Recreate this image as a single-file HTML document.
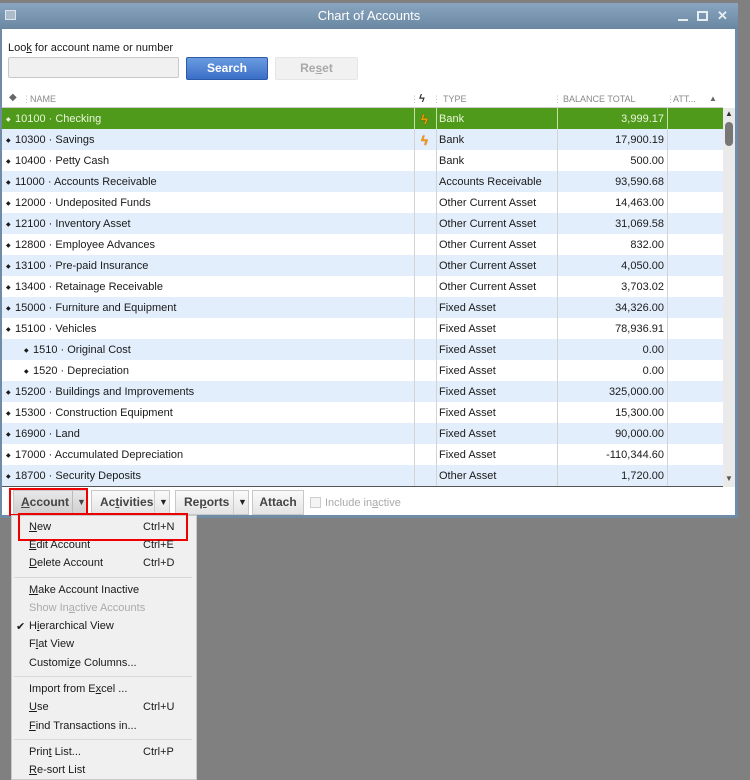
<!DOCTYPE html>
<html><head><meta charset="utf-8"><style>
*{margin:0;padding:0;box-sizing:border-box}
body{width:750px;height:780px;background:#808080;position:relative;overflow:hidden;font-family:"Liberation Sans",sans-serif;font-size:11px;color:#1a1a1a}
.abs{position:absolute}
#win{left:0;top:3px;width:738px;height:515px;background:#6f8ba5}
#title{left:0;top:3px;width:738px;height:26px;background:linear-gradient(#89a5bf,#6a87a2);color:#fff;font-size:13px;text-align:center;line-height:26px}
#body{left:2px;top:29px;width:733px;height:486px;background:#fff}
.row{position:absolute;left:2px;width:721px;height:21px;line-height:23px;font-size:11px}
.row span{position:absolute;top:0;white-space:nowrap}
.c{position:absolute;top:0;width:1px;height:21px;background:#d0d0d0}
.btn{position:absolute;top:490px;height:25px;border:1px solid #c8c8c8;background:linear-gradient(#fafafa,#e4e4e4);font-weight:bold;color:#444;line-height:23px;font-size:12px}
.mi{position:absolute;left:29px;font-size:11px;color:#1a1a1a}
.sc{position:absolute;left:143px;font-size:11px;color:#1a1a1a}
.sep{position:absolute;left:14px;width:178px;height:1px;background:#d8d8d8}
u{text-decoration:underline}
</style></head><body>
<div class="abs" id="win"></div>
<div class="abs" id="title">Chart of Accounts
<div class="abs" style="left:5px;top:7px;width:11px;height:10px;border:1px solid #dde6ee;background:#aabbcc"></div>
<div class="abs" style="left:678px;top:16px;width:10px;height:2px;background:#e6edf3"></div>
<div class="abs" style="left:697px;top:8px;width:11px;height:10px;border:2px solid #e6edf3"></div>
<div class="abs" style="left:717px;top:0;color:#e6edf3;font-weight:bold;font-size:13px">✕</div>
</div>
<div class="abs" id="body"></div>
<div class="abs" style="left:8px;top:42px;font-size:11px">Loo<u>k</u> for account name or number</div>
<div class="abs" style="left:8px;top:57px;width:171px;height:21px;border:1px solid #c8c8c8;border-radius:2px;background:#f0f0f0"></div>
<div class="abs" style="left:186px;top:57px;width:82px;height:23px;border:1px solid #2c5aa8;border-radius:2px;background:linear-gradient(#6a9be0,#3b6fc7);color:#fff;font-weight:bold;text-align:center;line-height:21px;font-size:12px">Search</div>
<div class="abs" style="left:275px;top:57px;width:83px;height:23px;border:1px solid #e6e6e6;border-radius:2px;background:#f1f1f1;color:#a8a8a8;font-weight:bold;text-align:center;line-height:21px;font-size:12px">Re<u>s</u>et</div>
<!-- header -->
<div class="abs" style="left:2px;top:90px;width:733px;height:18px;font-size:9px;color:#8a8a8a;line-height:18px">
<span class="abs" style="left:7px;top:-1px;font-size:10px;color:#666">◆</span>
<span class="abs" style="left:20px;color:#bbb">⋮</span><span class="abs" style="left:28px">NAME</span>
<span class="abs" style="left:408px;color:#bbb">⋮</span><span class="abs" style="left:417px;color:#333;font-size:11px;font-weight:bold">ϟ</span>
<span class="abs" style="left:430px;color:#bbb">⋮</span><span class="abs" style="left:441px">TYPE</span>
<span class="abs" style="left:551px;color:#bbb">⋮</span><span class="abs" style="left:561px">BALANCE TOTAL</span>
<span class="abs" style="left:664px;color:#bbb">⋮</span><span class="abs" style="left:671px">ATT...</span>
<span class="abs" style="left:707px;font-size:8px;color:#666">▲</span>
</div>
<div class="abs" style="left:2px;top:107px;width:721px;height:1px;background:#ccc"></div>
<div id="rows"></div>
<!-- scrollbar -->
<div class="abs" style="left:723px;top:108px;width:12px;height:379px;background:#eaeaea"></div>
<div class="abs" style="left:725px;top:109px;font-size:8px;color:#333">▲</div>
<div class="abs" style="left:725px;top:122px;width:8px;height:24px;border-radius:4px;background:#777"></div>
<div class="abs" style="left:725px;top:474px;font-size:8px;color:#555">▼</div>
<div class="abs" style="left:2px;top:486px;width:721px;height:1px;background:#555"></div>
<!-- toolbar -->
<div class="btn" style="left:13px;width:74px;background:linear-gradient(#e8e8e8,#cfcfcf)"><span style="position:absolute;left:7px"><u>A</u>ccount</span><span style="position:absolute;left:58px;border-left:1px solid #bbb;padding-left:4px;font-size:9px">▼</span></div>
<div class="abs" style="left:9px;top:488px;width:79px;height:28px;border:2px solid #e00"></div>
<div class="btn" style="left:91px;width:79px"><span style="position:absolute;left:8px">Ac<u>t</u>ivities</span><span style="position:absolute;left:62px;border-left:1px solid #ccc;padding-left:4px;font-size:9px;color:#222">▼</span></div>
<div class="btn" style="left:175px;width:74px"><span style="position:absolute;left:8px">Re<u>p</u>orts</span><span style="position:absolute;left:57px;border-left:1px solid #ccc;padding-left:4px;font-size:9px;color:#222">▼</span></div>
<div class="btn" style="left:252px;width:52px;text-align:center">Attach</div>
<div class="abs" style="left:310px;top:497px;width:11px;height:11px;border:1px solid #ccc;background:#f4f4f4"></div>
<div class="abs" style="left:325px;top:497px;color:#aaa;font-size:11px">Include in<u>a</u>ctive</div>
<!-- menu -->
<div class="abs" style="left:11px;top:515px;width:186px;height:265px;background:#f0f0f0;border:1px solid #c9c9c9"></div>
<div class="abs" style="left:18px;top:513px;width:170px;height:28px;border:2px solid #e00"></div>
<div class="mi" style="top:521px"><u>N</u>ew</div><div class="sc" style="top:521px">Ctrl+N</div>
<div class="mi" style="top:539px"><u>E</u>dit Account</div><div class="sc" style="top:539px">Ctrl+E</div>
<div class="mi" style="top:557px"><u>D</u>elete Account</div><div class="sc" style="top:557px">Ctrl+D</div>
<div class="sep" style="top:577px"></div>
<div class="mi" style="top:584px"><u>M</u>ake Account Inactive</div>
<div class="mi" style="top:602px;color:#aaa">Show In<u>a</u>ctive Accounts</div>
<div class="abs" style="left:16px;top:620px;font-size:11px">✔</div>
<div class="mi" style="top:620px">H<u>i</u>erarchical View</div>
<div class="mi" style="top:638px">F<u>l</u>at View</div>
<div class="mi" style="top:657px">Customi<u>z</u>e Columns...</div>
<div class="sep" style="top:676px"></div>
<div class="mi" style="top:683px">Import from E<u>x</u>cel ...</div>
<div class="mi" style="top:701px"><u>U</u>se</div><div class="sc" style="top:701px">Ctrl+U</div>
<div class="mi" style="top:720px"><u>F</u>ind Transactions in...</div>
<div class="sep" style="top:739px"></div>
<div class="mi" style="top:746px">Prin<u>t</u> List...</div><div class="sc" style="top:746px">Ctrl+P</div>
<div class="mi" style="top:764px"><u>R</u>e-sort List</div>
<script>
var d=[["10100 · Checking","Bank","3,999.17",1,0],["10300 · Savings","Bank","17,900.19",1,0],["10400 · Petty Cash","Bank","500.00",0,0],["11000 · Accounts Receivable","Accounts Receivable","93,590.68",0,0],["12000 · Undeposited Funds","Other Current Asset","14,463.00",0,0],["12100 · Inventory Asset","Other Current Asset","31,069.58",0,0],["12800 · Employee Advances","Other Current Asset","832.00",0,0],["13100 · Pre-paid Insurance","Other Current Asset","4,050.00",0,0],["13400 · Retainage Receivable","Other Current Asset","3,703.02",0,0],["15000 · Furniture and Equipment","Fixed Asset","34,326.00",0,0],["15100 · Vehicles","Fixed Asset","78,936.91",0,0],["1510 · Original Cost","Fixed Asset","0.00",0,1],["1520 · Depreciation","Fixed Asset","0.00",0,1],["15200 · Buildings and Improvements","Fixed Asset","325,000.00",0,0],["15300 · Construction Equipment","Fixed Asset","15,300.00",0,0],["16900 · Land","Fixed Asset","90,000.00",0,0],["17000 · Accumulated Depreciation","Fixed Asset","-110,344.60",0,0],["18700 · Security Deposits","Other Asset","1,720.00",0,0]];
var h="";
d.forEach(function(r,i){
var top=108+i*21,g=i==0,bg=g?"#4f9a1a":(i%2?"#e3eefc":"#fff"),col=g?"#eaf6dc":"#1a1a1a",sc=g?"#c5e0a8":"#d3d3d3";
var ind=r[4]?22:4;
h+='<div class="row" style="top:'+top+'px;background:'+bg+';color:'+col+'">'+
'<span style="left:'+ind+'px;font-size:6px;top:1px">◆</span>'+
'<span style="left:'+(ind+9)+'px">'+r[0]+'</span>'+
'<div class="c" style="left:412px;background:'+sc+'"></div>'+
(r[3]?'<span style="left:419px;color:#e8a000;font-weight:bold;font-size:13px;text-shadow:0 0 1px #d00">ϟ</span>':'')+
'<div class="c" style="left:434px;background:'+sc+'"></div>'+
'<span style="left:437px">'+r[1]+'</span>'+
'<div class="c" style="left:555px;background:'+sc+'"></div>'+
'<span style="right:59px">'+r[2]+'</span>'+
'<div class="c" style="left:665px;background:'+sc+'"></div></div>';
});
document.getElementById("rows").innerHTML=h;
</script>
</body></html>
